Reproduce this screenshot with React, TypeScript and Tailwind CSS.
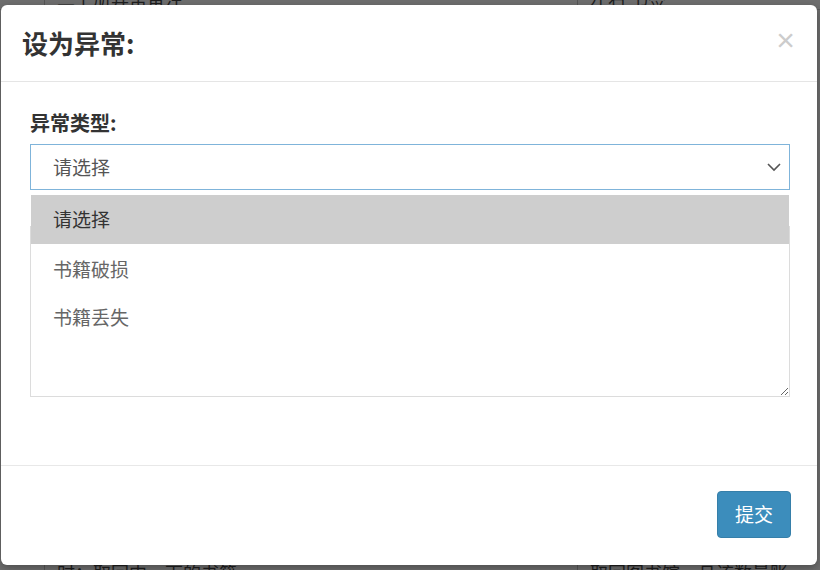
import React from "react";

export default function App() {
  const font = { fontFamily: '"Noto Sans CJK SC", "Noto Sans", sans-serif' };
  return (
    <div
      className="relative w-[820px] h-[570px] overflow-hidden bg-[#6e6e6e]"
      style={font}
    >
      {/* background page (dimmed) */}
      <div className="absolute inset-0 flex flex-col justify-between">
        <div className="flex h-[24px] -mt-[14px] border-b border-[#5a5a5a]">
          <div className="w-[45px] border-r border-[#555]" />
          <div className="w-[533px] border-r border-[#555] pl-[12px] text-[18px] leading-[24px] text-[#1e1e1e]">
            二上册异常备注
          </div>
          <div className="flex-1 pl-[12px] text-[18px] leading-[24px] text-[#1e1e1e]">
            左右 书签
          </div>
        </div>
        <div className="flex h-[24px] -mb-[14px]">
          <div className="w-[45px] border-r border-[#555]" />
          <div className="w-[533px] border-r border-[#555] pl-[12px] text-[18px] leading-[24px] text-[#1e1e1e]">
            时：取回中一下的书籍
          </div>
          <div className="flex-1 pl-[12px] text-[18px] leading-[24px] text-[#1e1e1e]">
            取回图书馆，且该数量账
          </div>
        </div>
      </div>

      {/* modal */}
      <div className="absolute left-[1px] top-[5px] w-[816px] h-[560px] bg-white rounded-[6px] flex flex-col shadow-[0_3px_9px_rgba(0,0,0,0.3)]">
        {/* header */}
        <div className="h-[77px] border-b border-[#e5e5e5] flex items-center justify-between pl-[21px] pr-[22px] shrink-0">
          <div className="text-[26px] font-bold text-[#333] leading-[34px] -mt-[1px]">
            设为异常:
          </div>
          <div
            className="text-[32px] leading-[30px] text-[#cccccc] -mt-[6px]"
            style={{ fontFamily: '"Liberation Sans", sans-serif' }}
          >
            ×
          </div>
        </div>

        {/* body */}
        <div className="relative flex-1 px-[29px] pt-[28px]">
          <div className="text-[20px] font-bold text-[#333] leading-[26px]">
            异常类型:
          </div>
          <div className="mt-[8px] h-[46px] w-[760px] border border-[#7fb4da] flex items-center justify-between pl-[22px] pr-[7px]">
            <span className="text-[19px] text-[#555] leading-[26px]">请选择</span>
            <svg width="16" height="10" viewBox="0 0 16 10">
              <polyline points="2,2 8,8 14,2" fill="none" stroke="#555" strokeWidth="1.6" />
            </svg>
          </div>
          <textarea
            readOnly
            className="block mt-[36px] w-[760px] h-[171px] border border-[#dcdcdc] outline-none"
          />

          {/* dropdown */}
          <div className="absolute left-[30px] top-[113px] w-[758px] bg-white flex flex-col">
            <div className="h-[49px] bg-[#cecece] flex items-center pl-[22px] text-[19px] text-[#333]">
              请选择
            </div>
            <div className="h-[50px] flex items-center pl-[22px] text-[19px] text-[#666]">
              书籍破损
            </div>
            <div className="h-[47px] flex items-center pl-[22px] text-[19px] text-[#666]">
              书籍丢失
            </div>
          </div>
        </div>

        {/* footer */}
        <div className="h-[100px] border-t border-[#e8e8e8] flex items-center justify-end pr-[26px] shrink-0">
          <button className="w-[74px] h-[47px] rounded-[4px] bg-[#3c8dbc] border border-[#367fa9] text-white text-[19px] -mt-[2px]">
            提交
          </button>
        </div>
      </div>
    </div>
  );
}
